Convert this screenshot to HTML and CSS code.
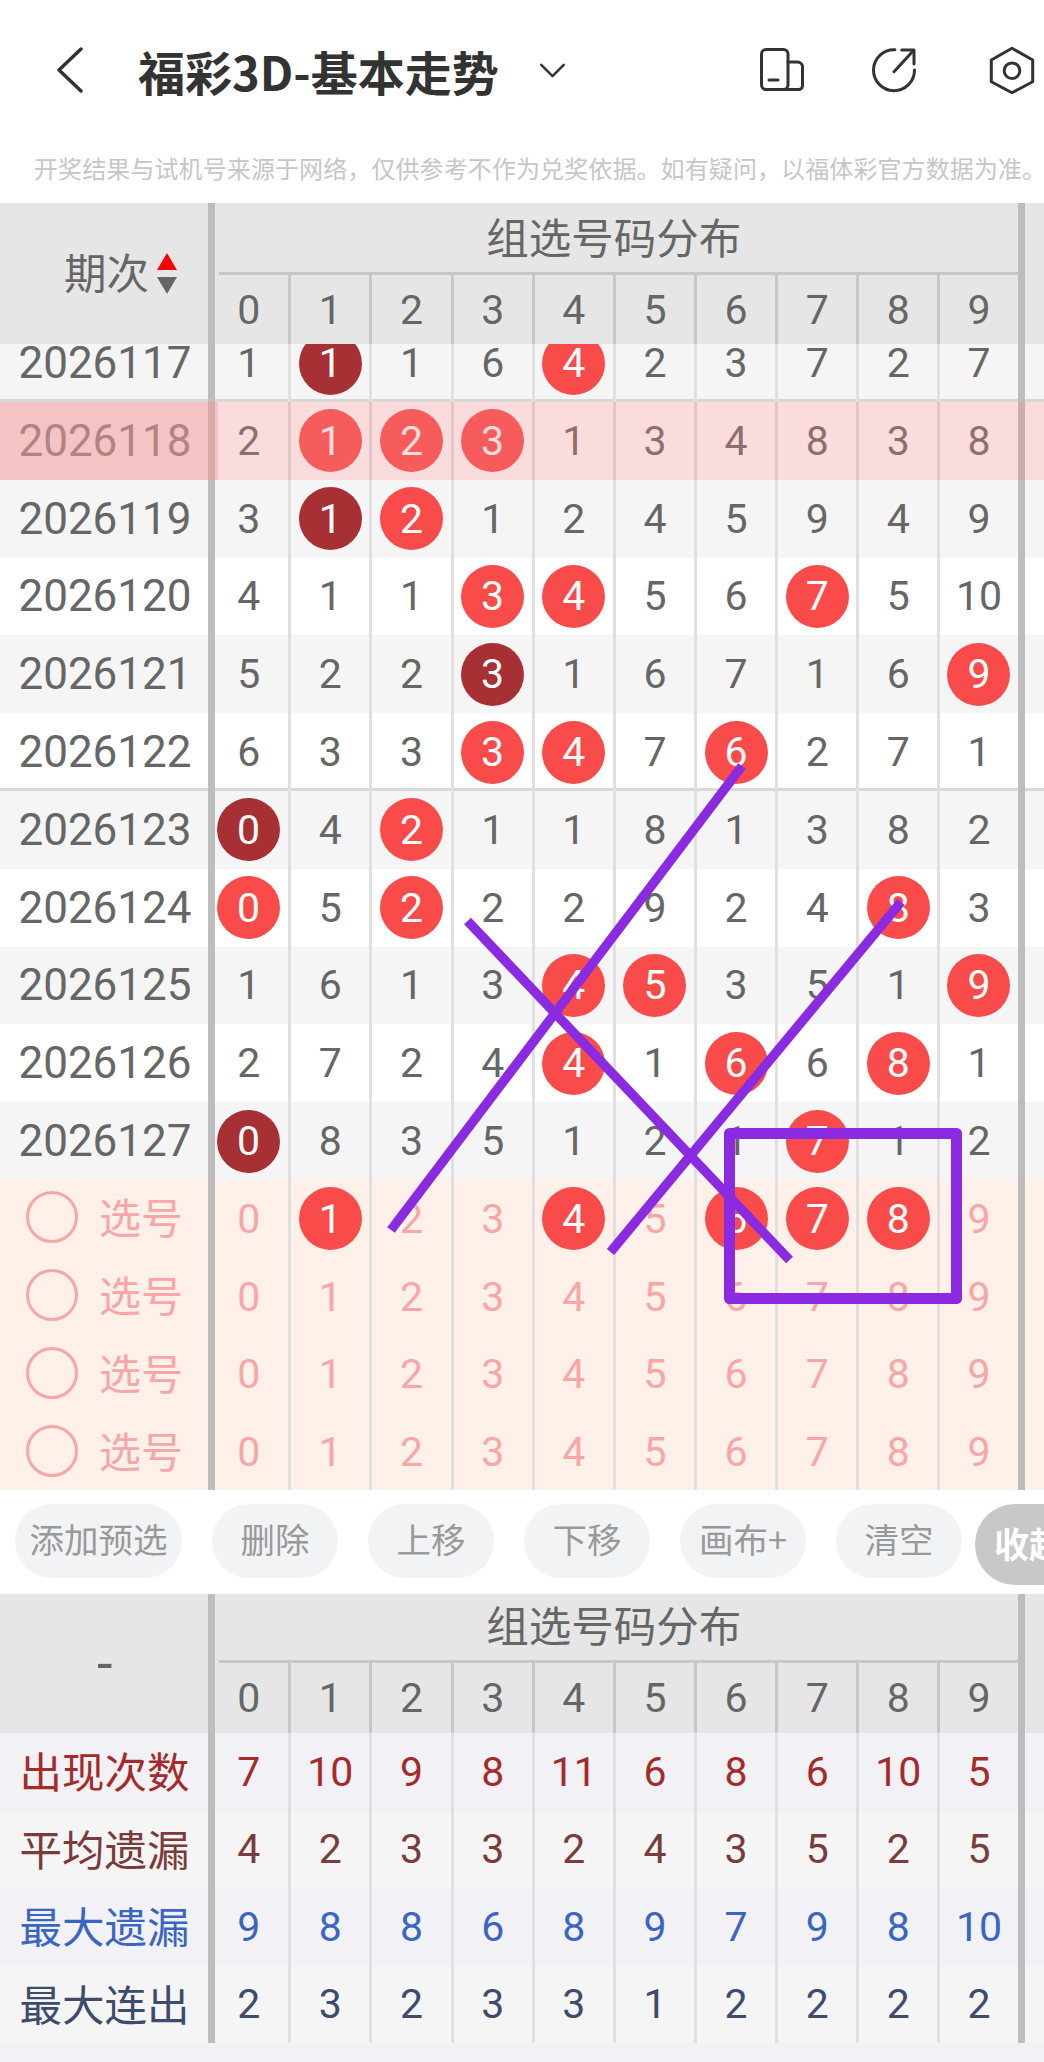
FILE: index.html
```html
<!DOCTYPE html>
<html lang="zh-CN">
<head>
<meta charset="utf-8">
<title>福彩3D-基本走势</title>
<link rel="stylesheet" href="styles.css">
</head>
<body>
<header class="nav">
  <svg class="back" viewBox="0 0 28 46"><path d="M25 2 3 23l22 21"/></svg>
  <h1 class="title">福彩3D-基本走势</h1>
  <svg class="caret" viewBox="0 0 28 16"><path d="M2 2 14 14 26 2"/></svg>
  <div class="tools">
    <svg class="ic ic-a" viewBox="0 0 44 44"><rect x="1.5" y="1.5" width="26.5" height="40" rx="4.5"/><path d="M28 14h9.5a5 5 0 0 1 5 5v18.5a4 4 0 0 1-4 4H24"/><path d="M9 32h9"/></svg>
    <svg class="ic ic-b" viewBox="0 0 48 48"><path d="M25 3.7A20.5 20.5 0 1 0 44.5 24"/><path d="M24 25.7 43 5"/><path d="M31.7 4H44v14"/></svg>
    <svg class="ic ic-c" viewBox="0 0 46 49"><path d="M23 2.3 43.7 14v21.7L23 46.7 2.3 35.7V14z"/><circle cx="23" cy="24.7" r="7.8"/></svg>
  </div>
</header>
<p class="notice">开奖结果与试机号来源于网络，仅供参考不作为兑奖依据。如有疑问，以福体彩官方数据为准。</p>

<section class="head">
  <div class="head-label"><span class="lift">期次</span><span class="sort"><i class="up"></i><i class="down"></i></span></div>
  <div class="head-main">
    <div class="head-title"><span>组选号码分布</span></div>
    <div class="cells"><span class="c">0</span><span class="c">1</span><span class="c">2</span><span class="c">3</span><span class="c">4</span><span class="c">5</span><span class="c">6</span><span class="c">7</span><span class="c">8</span><span class="c">9</span></div>
  </div>
  <div class="tail"></div>
</section>

<section class="list">
  <div class="rows">
    <div class="row alt sep"><div class="label">2026117</div><div class="cells"><span class="c">1</span><span class="c"><b class="ball dark">1</b></span><span class="c">1</span><span class="c">6</span><span class="c"><b class="ball">4</b></span><span class="c">2</span><span class="c">3</span><span class="c">7</span><span class="c">2</span><span class="c">7</span></div><div class="tail"></div></div>
    <div class="row hl"><div class="label">2026118</div><div class="cells"><span class="c">2</span><span class="c"><b class="ball">1</b></span><span class="c"><b class="ball">2</b></span><span class="c"><b class="ball">3</b></span><span class="c">1</span><span class="c">3</span><span class="c">4</span><span class="c">8</span><span class="c">3</span><span class="c">8</span></div><div class="tail"></div></div>
    <div class="row alt"><div class="label">2026119</div><div class="cells"><span class="c">3</span><span class="c"><b class="ball dark">1</b></span><span class="c"><b class="ball">2</b></span><span class="c">1</span><span class="c">2</span><span class="c">4</span><span class="c">5</span><span class="c">9</span><span class="c">4</span><span class="c">9</span></div><div class="tail"></div></div>
    <div class="row"><div class="label">2026120</div><div class="cells"><span class="c">4</span><span class="c">1</span><span class="c">1</span><span class="c"><b class="ball">3</b></span><span class="c"><b class="ball">4</b></span><span class="c">5</span><span class="c">6</span><span class="c"><b class="ball">7</b></span><span class="c">5</span><span class="c">10</span></div><div class="tail"></div></div>
    <div class="row alt"><div class="label">2026121</div><div class="cells"><span class="c">5</span><span class="c">2</span><span class="c">2</span><span class="c"><b class="ball dark">3</b></span><span class="c">1</span><span class="c">6</span><span class="c">7</span><span class="c">1</span><span class="c">6</span><span class="c"><b class="ball">9</b></span></div><div class="tail"></div></div>
    <div class="row sep"><div class="label">2026122</div><div class="cells"><span class="c">6</span><span class="c">3</span><span class="c">3</span><span class="c"><b class="ball">3</b></span><span class="c"><b class="ball">4</b></span><span class="c">7</span><span class="c"><b class="ball">6</b></span><span class="c">2</span><span class="c">7</span><span class="c">1</span></div><div class="tail"></div></div>
    <div class="row alt"><div class="label">2026123</div><div class="cells"><span class="c"><b class="ball dark">0</b></span><span class="c">4</span><span class="c"><b class="ball">2</b></span><span class="c">1</span><span class="c">1</span><span class="c">8</span><span class="c">1</span><span class="c">3</span><span class="c">8</span><span class="c">2</span></div><div class="tail"></div></div>
    <div class="row"><div class="label">2026124</div><div class="cells"><span class="c"><b class="ball">0</b></span><span class="c">5</span><span class="c"><b class="ball">2</b></span><span class="c">2</span><span class="c">2</span><span class="c">9</span><span class="c">2</span><span class="c">4</span><span class="c"><b class="ball">8</b></span><span class="c">3</span></div><div class="tail"></div></div>
    <div class="row alt"><div class="label">2026125</div><div class="cells"><span class="c">1</span><span class="c">6</span><span class="c">1</span><span class="c">3</span><span class="c"><b class="ball">4</b></span><span class="c"><b class="ball">5</b></span><span class="c">3</span><span class="c">5</span><span class="c">1</span><span class="c"><b class="ball">9</b></span></div><div class="tail"></div></div>
    <div class="row"><div class="label">2026126</div><div class="cells"><span class="c">2</span><span class="c">7</span><span class="c">2</span><span class="c">4</span><span class="c"><b class="ball">4</b></span><span class="c">1</span><span class="c"><b class="ball">6</b></span><span class="c">6</span><span class="c"><b class="ball">8</b></span><span class="c">1</span></div><div class="tail"></div></div>
    <div class="row alt"><div class="label">2026127</div><div class="cells"><span class="c"><b class="ball dark">0</b></span><span class="c">8</span><span class="c">3</span><span class="c">5</span><span class="c">1</span><span class="c">2</span><span class="c">1</span><span class="c"><b class="ball">7</b></span><span class="c">1</span><span class="c">2</span></div><div class="tail"></div></div>
    <div class="row pick"><div class="label"><i class="radio"></i><span class="lift">选号</span></div><div class="cells"><span class="c">0</span><span class="c"><b class="ball">1</b></span><span class="c">2</span><span class="c">3</span><span class="c"><b class="ball">4</b></span><span class="c">5</span><span class="c"><b class="ball">6</b></span><span class="c"><b class="ball">7</b></span><span class="c"><b class="ball">8</b></span><span class="c">9</span></div><div class="tail"></div></div>
    <div class="row pick"><div class="label"><i class="radio"></i><span class="lift">选号</span></div><div class="cells"><span class="c">0</span><span class="c">1</span><span class="c">2</span><span class="c">3</span><span class="c">4</span><span class="c">5</span><span class="c">6</span><span class="c">7</span><span class="c">8</span><span class="c">9</span></div><div class="tail"></div></div>
    <div class="row pick"><div class="label"><i class="radio"></i><span class="lift">选号</span></div><div class="cells"><span class="c">0</span><span class="c">1</span><span class="c">2</span><span class="c">3</span><span class="c">4</span><span class="c">5</span><span class="c">6</span><span class="c">7</span><span class="c">8</span><span class="c">9</span></div><div class="tail"></div></div>
    <div class="row pick"><div class="label"><i class="radio"></i><span class="lift">选号</span></div><div class="cells"><span class="c">0</span><span class="c">1</span><span class="c">2</span><span class="c">3</span><span class="c">4</span><span class="c">5</span><span class="c">6</span><span class="c">7</span><span class="c">8</span><span class="c">9</span></div><div class="tail"></div></div>
  </div>
</section>

<nav class="bar">
  <button class="pill wide">添加预选</button>
  <button class="pill">删除</button>
  <button class="pill">上移</button>
  <button class="pill">下移</button>
  <button class="pill">画布+</button>
  <button class="pill">清空</button>
  <button class="fold">收起</button>
</nav>

<section class="head second">
  <div class="head-label dash">-</div>
  <div class="head-main">
    <div class="head-title"><span>组选号码分布</span></div>
    <div class="cells"><span class="c">0</span><span class="c">1</span><span class="c">2</span><span class="c">3</span><span class="c">4</span><span class="c">5</span><span class="c">6</span><span class="c">7</span><span class="c">8</span><span class="c">9</span></div>
  </div>
  <div class="tail"></div>
</section>

<section class="stats">
  <div class="row stat s1"><div class="label">出现次数</div><div class="cells"><span class="c">7</span><span class="c">10</span><span class="c">9</span><span class="c">8</span><span class="c">11</span><span class="c">6</span><span class="c">8</span><span class="c">6</span><span class="c">10</span><span class="c">5</span></div><div class="tail"></div></div>
  <div class="row stat s2"><div class="label">平均遗漏</div><div class="cells"><span class="c">4</span><span class="c">2</span><span class="c">3</span><span class="c">3</span><span class="c">2</span><span class="c">4</span><span class="c">3</span><span class="c">5</span><span class="c">2</span><span class="c">5</span></div><div class="tail"></div></div>
  <div class="row stat s3"><div class="label">最大遗漏</div><div class="cells"><span class="c">9</span><span class="c">8</span><span class="c">8</span><span class="c">6</span><span class="c">8</span><span class="c">9</span><span class="c">7</span><span class="c">9</span><span class="c">8</span><span class="c">10</span></div><div class="tail"></div></div>
  <div class="row stat s4"><div class="label">最大连出</div><div class="cells"><span class="c">2</span><span class="c">3</span><span class="c">2</span><span class="c">3</span><span class="c">3</span><span class="c">1</span><span class="c">2</span><span class="c">2</span><span class="c">2</span><span class="c">2</span></div><div class="tail"></div></div>
</section>
<div class="foot"></div>

<svg class="canvas" viewBox="0 0 1044 2062">
  <path d="M391 1230 742 766"/>
  <path d="M467.5 921 789.5 1260"/>
  <path d="M610.5 1252 901 902"/>
  <rect x="729.5" y="1133.5" width="227" height="165"/>
</svg>
</body>
</html>
```

FILE: styles.css
```css
* { box-sizing: border-box; }
html, body { margin: 0; padding: 0; }
body {
  position: relative;
  width: 1044px;
  height: 2062px;
  overflow: hidden;
  background: #fff;
  font-family: Roboto, "Noto Sans CJK SC", sans-serif;
  color: #666;
}
i { font-style: normal; display: block; }

/* top bar */
.nav { display: flex; align-items: center; height: 140px; padding: 0 9px 0 56px; }
.back { width: 28px; height: 46px; fill: none; stroke: #333; stroke-width: 3.5; stroke-linecap: round; stroke-linejoin: round; }
.title {
  margin: 0 0 0 54px;
  font-family: "Noto Sans CJK SC", sans-serif;
  font-size: 47px;
  font-weight: 700;
  color: #333;
  white-space: nowrap;
}
.caret { width: 27px; height: 15px; margin-left: 40px; fill: none; stroke: #333; stroke-width: 2.6; stroke-linecap: round; stroke-linejoin: round; }
.tools { display: flex; align-items: center; margin-left: auto; }
.ic { fill: none; stroke: #333; stroke-width: 3; stroke-linecap: round; stroke-linejoin: round; }
.ic-a { width: 44px; height: 44px; }
.ic-b { width: 48px; height: 48px; margin-left: 66px; }
.ic-c { width: 46px; height: 49px; margin-left: 71px; }

.notice {
  margin: 0;
  height: 63px;
  padding: 11px 0 0 34px;
  font-family: "Noto Sans CJK SC", sans-serif;
  font-size: 24px;
  line-height: 34px;
  letter-spacing: .1px;
  color: #c6c6c6;
  white-space: nowrap;
}

/* shared grid */
.cells { display: grid; grid-template-columns: 80.3px repeat(8, 81.15px) 80px; width: 809.5px; flex: none; }
.c {
  display: flex;
  align-items: center;
  justify-content: center;
  border-left: 3px solid #e0e0e0;
  font-size: 41px;
}
.c:first-child { border-left: 7px solid #bdbdbd; padding-right: 6px; }
.tail { flex: 1; border-left: 7px solid #bdbdbd; }
.lift { margin-bottom: 3px; }

/* column headers */
.head { display: flex; height: 141px; background: #e6e6e6; }
.head-label { display: flex; align-items: center; width: 208px; padding: 0 0 3px 64px; font-family: "Noto Sans CJK SC", sans-serif; font-size: 42.5px; flex: none; }
.sort { margin-left: 8px; padding-top: 3px; }
.sort i { width: 0; height: 0; border-left: 10.5px solid transparent; border-right: 10.5px solid transparent; }
.up { border-bottom: 17px solid #f00; margin-bottom: 7px; }
.down { border-top: 17px solid #666; }
.head-main { display: flex; flex-direction: column; }
.head-title { height: 72px; border-left: 7px solid #bdbdbd; flex: none; }
.head-title span {
  display: block;
  height: 72px;
  margin-left: 4px;
  padding-right: 9px;
  border-bottom: 3px solid #c8c8c8;
  font-family: "Noto Sans CJK SC", sans-serif;
  font-size: 42.5px;
  line-height: 66px;
  text-align: center;
}
.head .cells { flex: 1; }
.head .c { border-left-color: #c8c8c8; }
.head .c:first-child { border-left-color: #bdbdbd; }
.second { height: 139px; }
.second .head-title { height: 69px; }
.second .head-title span { height: 69px; line-height: 60px; }
.head-label.dash { padding: 0 0 0 97px; font-family: Roboto, sans-serif; font-size: 56px; }

/* scrolling rows */
.list { height: 1146px; overflow: hidden; }
.rows { margin-top: -19.8px; }
.row { position: relative; display: flex; height: 77.8px; background-color: #fff; }
.row .cells { height: 100%; }
.alt { background-color: #f5f5f5; }
.sep { background-image: linear-gradient(#d8d8d8, #d8d8d8); background-size: 100% 3px; background-position: bottom; background-repeat: no-repeat; }
.label {
  display: flex;
  align-items: center;
  justify-content: center;
  width: 208px;
  padding-left: 2px;
  flex: none;
  font-size: 44px;
}
.ball {
  display: flex;
  align-items: center;
  justify-content: center;
  width: 63px;
  height: 63px;
  border-radius: 50%;
  background: #fa4b4b;
  color: #fff;
  font-weight: 400;
  flex: none;
}
.dark { background: #a63033; }

.hl::before, .hl::after { content: ""; position: absolute; top: 0; bottom: 0; left: 0; z-index: 1; }
.hl::after { right: 0; background: rgba(241, 134, 134, .29); }
.hl::before { width: 218px; background: rgba(235, 160, 160, .4); z-index: 2; }

.pick { background: #fff0ea; color: #f9a6a6; }
.pick .label { justify-content: flex-start; padding: 0 0 3px 26px; font-family: "Noto Sans CJK SC", sans-serif; font-size: 42px; }
.radio { width: 52px; height: 52px; margin-right: 21px; border: 3px solid #f9a6a6; border-radius: 50%; }

/* action bar */
.bar { display: flex; height: 104px; padding: 14px 0 0 15px; gap: 30px; overflow: hidden; align-items: flex-start; }
.pill, .fold {
  height: 74px;
  width: 126px;
  padding: 0 0 7px;
  border: 0;
  border-radius: 37px;
  background: #f2f3f5;
  color: #999;
  font-family: "Noto Sans CJK SC", sans-serif;
  font-size: 34.5px;
  flex: none;
}
.wide { width: 167px; }
.fold {
  width: 113px;
  height: 81px;
  margin-left: -17px;
  padding: 0 0 4px 19px;
  border-radius: 40px 0 0 40px;
  background: #c8c8c8;
  color: #fff;
  font-size: 35px;
  font-weight: 700;
  text-align: left;
  white-space: nowrap;
}

/* statistics */
.stat .label { padding: 0 0 4px 1px; font-family: "Noto Sans CJK SC", sans-serif; font-size: 42.5px; }
.stat { height: 77.5px; }
.s1, .s3 { background-color: #f1f1f6; }
.s2, .s4 { background-color: #f5f5f5; }
.s1 { color: #a52a2a; }
.s2 { color: #7a3b3b; }
.s3 { color: #3a65c0; }
.s4 { color: #3d4c6d; }
.foot { height: 19px; background: #f1f1f6; }

/* hand-drawn marks over the table */
.canvas { position: absolute; top: 0; left: 0; width: 1044px; height: 2062px; z-index: 5; fill: none; stroke: #8a2be2; stroke-width: 9.5; pointer-events: none; }
.canvas rect { stroke-width: 11; stroke-linejoin: round; }
```
